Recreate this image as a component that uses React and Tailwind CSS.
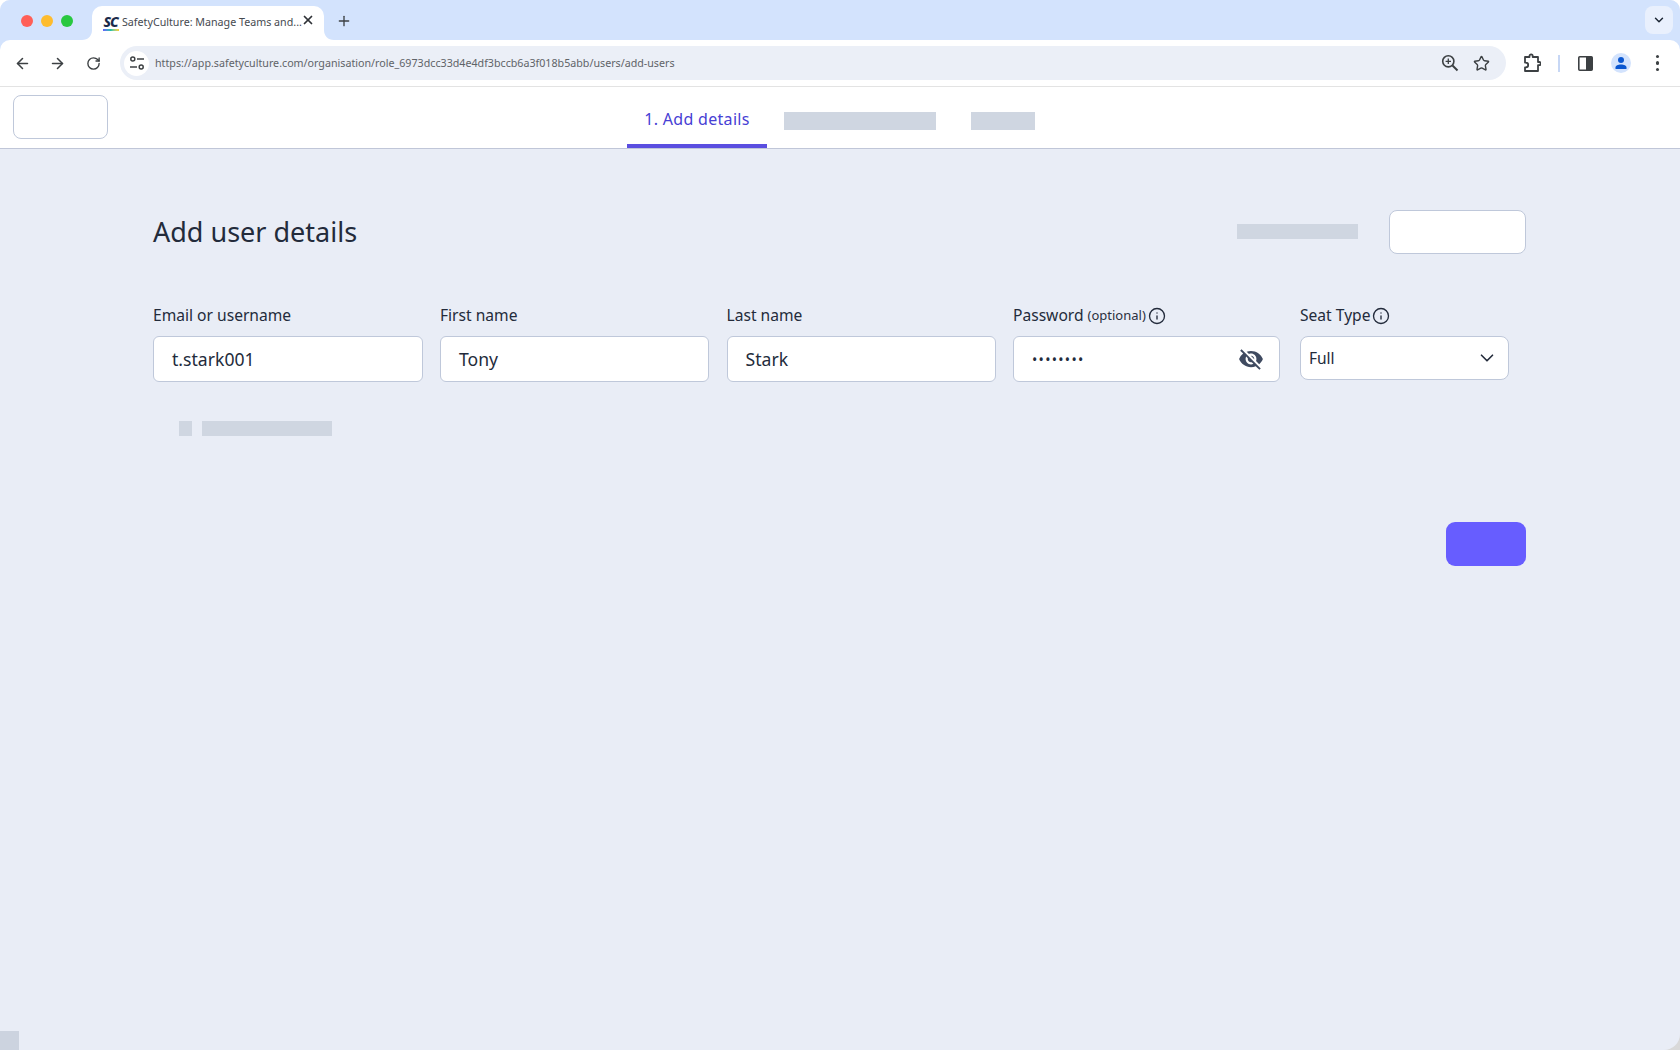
import React from "react";
import { ArrowLeft, ArrowRight, RotateCw, Plus, X, ChevronDown, Star, Info } from "lucide-react";
import { MdVisibilityOff } from "react-icons/md";

function Flare({ side }) {
  const d = side === "left" ? "M10 0 C10 6 6 10 0 10 L10 10 Z" : "M0 0 C0 6 4 10 10 10 L0 10 Z";
  return (
    <svg width="10" height="10" viewBox="0 0 10 10" className={side === "left" ? "absolute bottom-0 left-[-10px]" : "absolute bottom-0 right-[-10px]"}>
      <path d={d} fill="#ffffff" />
    </svg>
  );
}

function TuneIcon() {
  return (
    <svg width="16" height="16" viewBox="0 0 16 16" fill="none" stroke="#3c4043" strokeWidth="1.5">
      <circle cx="3.8" cy="4" r="2" />
      <path d="M8 4h7" />
      <path d="M1 12h7" />
      <circle cx="12.2" cy="12" r="2" />
    </svg>
  );
}

function ZoomPlus() {
  return (
    <svg width="18" height="18" viewBox="0 0 18 18" fill="none" stroke="#3c4043" strokeWidth="1.6">
      <circle cx="7.3" cy="7.3" r="5.6" />
      <path d="M11.5 11.5L16.5 16.5" strokeWidth="2" />
      <path d="M7.3 4.6v5.4M4.6 7.3h5.4" strokeWidth="1.3" />
    </svg>
  );
}

function PuzzleIcon() {
  return (
    <svg width="18" height="20" viewBox="0 0 18 20" fill="none" stroke="#3c4043" strokeWidth="1.8" strokeLinejoin="round">
      <path d="M2 4h4.5V3a1.6 1.6 0 0 1 3.2 0v1H15v5h1.2a1.6 1.6 0 0 1 0 3.2H15V18H2v-3.6h.8a2.4 2.4 0 0 0 0-4.8H2z" />
    </svg>
  );
}

function SidePanelIcon() {
  return (
    <svg width="15" height="15" viewBox="0 0 15 15">
      <rect x="0.8" y="0.8" width="13.4" height="13.4" rx="1" fill="#ffffff" stroke="#3c4043" strokeWidth="1.6" />
      <rect x="8" y="0.8" width="6.2" height="13.4" fill="#3c4043" />
    </svg>
  );
}

function Avatar() {
  return (
    <div className="w-[20px] h-[20px] rounded-full bg-[#d3e3fd] flex items-center justify-center">
      <svg width="14" height="14" viewBox="0 0 14 14" fill="#0b57d0">
        <circle cx="7" cy="4" r="3" />
        <path d="M1.5 13v-1.6C1.5 9.6 4 8.4 7 8.4s5.5 1.2 5.5 3V13z" />
      </svg>
    </div>
  );
}

function Kebab() {
  return (
    <div className="flex flex-col gap-[3px]">
      <span className="w-[3.5px] h-[3.5px] rounded-full bg-[#3c4043]" />
      <span className="w-[3.5px] h-[3.5px] rounded-full bg-[#3c4043]" />
      <span className="w-[3.5px] h-[3.5px] rounded-full bg-[#3c4043]" />
    </div>
  );
}

function Field({ label, width, children, extra }) {
  return (
    <div className={`flex flex-col ${width}`}>
      <div className="flex items-center h-[22px] pt-[2px] mb-[10px] text-[15.6px] font-normal text-[#232b3b] whitespace-nowrap">
        {label}
        {extra}
      </div>
      {children}
    </div>
  );
}

function TextBox({ value }) {
  return (
    <div className="h-[46px] bg-white border border-[#bfc8da] rounded-[6px] flex items-center pl-[18px] text-[17.6px] text-[#232b3b]">
      {value}
    </div>
  );
}

export default function App() {
  return (
    <div className="w-[1680px] h-[1050px] relative overflow-hidden bg-[linear-gradient(#ffffff_50%,#d9d9d9_50%)] font-['Noto_Sans','Liberation_Sans',sans-serif]">
      <div className="h-full flex flex-col bg-[#e9edf6] rounded-t-[10px] rounded-br-[16px] overflow-hidden">
        {/* Browser tab strip */}
        <div className="h-[40px] shrink-0 bg-[#d3e3fd] flex items-end relative">
          <div className="flex items-center gap-[8px] absolute left-[21px] top-[15px]">
            <span className="w-[12px] h-[12px] rounded-full bg-[#ff5f57]" />
            <span className="w-[12px] h-[12px] rounded-full bg-[#febc2e]" />
            <span className="w-[12px] h-[12px] rounded-full bg-[#28c840]" />
          </div>
          <div className="ml-[92px] h-[34px] w-[232px] bg-white rounded-t-[10px] relative flex items-center pl-[10px]">
            <Flare side="left" />
            <Flare side="right" />
            <div className="w-[17px] h-[16px] mr-[3px] flex flex-col items-center leading-none">
              <span className="text-[14px] leading-[13px] font-extrabold italic text-[#1b2a4a] tracking-[-1px]">SC</span>
              <span className="w-[16px] h-[2px] mt-[1px] bg-gradient-to-r from-[#6559ff] via-[#13c4a3] to-[#ffd028]" />
            </div>
            <span className="text-[10.7px] pb-[2px] text-[#45494f] whitespace-nowrap">SafetyCulture: Manage Teams and...</span>
            <X size={14} strokeWidth={3} className="text-[#2f3237] absolute left-[209px] top-[7px]" />
          </div>
          <Plus size={16} strokeWidth={2} className="text-[#3c4043] ml-[12px] mb-[11px]" />
          <div className="absolute right-[7px] top-[6px] w-[28px] h-[28px] rounded-[8px] bg-[#e9f0fd] flex items-center justify-center">
            <ChevronDown size={14} strokeWidth={2.5} className="text-[#1f2937]" />
          </div>
        </div>

        {/* Browser toolbar */}
        <div className="h-[47px] shrink-0 bg-[#d3e3fd]">
          <div className="h-[47px] bg-white rounded-t-[10px] border-b border-[#e3e3e3] flex items-center pl-[14px]">
            <ArrowLeft size={17} strokeWidth={2.2} className="text-[#3c4043] mr-[18px]" />
            <ArrowRight size={17} strokeWidth={2.2} className="text-[#3c4043] mr-[20px]" />
            <RotateCw size={15} strokeWidth={2.2} className="text-[#3c4043] mr-[19px]" />
            <div className="w-[1386px] h-[34px] rounded-full bg-[#ebeff7] flex items-center pl-[4px]">
              <div className="w-[25px] h-[25px] rounded-full bg-white flex items-center justify-center mr-[6px]">
                <TuneIcon />
              </div>
              <span className="text-[10.7px] text-[#5f6368] whitespace-nowrap">
                https://app.safetyculture.com/organisation/role_6973dcc33d4e4df3bccb6a3f018b5abb/users/add-users
              </span>
              <div className="ml-auto flex items-center gap-[14px] pr-[16px]">
                <ZoomPlus />
                <Star size={17} strokeWidth={2} className="text-[#3c4043]" />
              </div>
            </div>
            <div className="ml-[17px]"><PuzzleIcon /></div>
            <span className="w-[1.5px] h-[17px] bg-[#c7d7f5] ml-[17px]" />
            <div className="ml-[18px]"><SidePanelIcon /></div>
            <div className="ml-[18px]"><Avatar /></div>
            <div className="ml-[25px]"><Kebab /></div>
          </div>
        </div>

        {/* App header */}
        <div className="h-[62px] shrink-0 bg-white border-b border-[#c0c6d8] relative flex pl-[627px]">
          <div className="absolute left-[13px] top-[8px] w-[95px] h-[44px] rounded-[8px] bg-white border border-[#bfc8da]" />
          <div className="relative w-[140px] flex items-center justify-center pt-[3px] text-[16px] font-normal tracking-[0.3px] text-[#4740d4]">
            1. Add details
            <span className="absolute left-0 right-0 bottom-0 h-[4px] bg-[#5a4ee0]" />
          </div>
          <span className="w-[152px] h-[18px] mt-[25px] ml-[17px] bg-[#cfd6e1]" />
          <span className="w-[64px] h-[18px] mt-[25px] ml-[35px] bg-[#cfd6e1]" />
        </div>

        {/* Page */}
        <div className="flex flex-col pl-[153px] pr-[154px]">
          <div className="flex items-center justify-between mt-[61px] h-[44px]">
            <h1 className="text-[27px] font-normal text-[#232b3b]">Add user details</h1>
            <div className="flex items-center gap-[31px]">
              <span className="w-[121px] h-[15px] mb-[2px] bg-[#cfd6e1]" />
              <span className="w-[137px] h-[44px] rounded-[8px] bg-white border border-[#bfc8da]" />
            </div>
          </div>

          <div className="flex mt-[50px]">
            <Field label="Email or username" width="w-[270px] mr-[17px]"><TextBox value="t.stark001" /></Field>
            <Field label="First name" width="w-[269px] mr-[17.5px]"><TextBox value="Tony" /></Field>
            <Field label="Last name" width="w-[269px] mr-[17.5px]"><TextBox value="Stark" /></Field>
            <Field
              label="Password"
              width="w-[267px] mr-[20px]"
              extra={
                <>
                  <span className="ml-[4px] text-[13px] font-normal text-[#2a3040]">(optional)</span>
                  <Info size={18} strokeWidth={1.8} className="ml-[2.5px] text-[#232b3b]" />
                </>
              }
            >
              <div className="h-[46px] bg-white border border-[#bfc8da] rounded-[6px] flex items-center justify-between pl-[18px] pr-[15px]">
                <span className="text-[14px] text-[#232b3b] tracking-[1.3px]">••••••••</span>
                <MdVisibilityOff size={26} className="text-[#3f4a60]" />
              </div>
            </Field>
            <Field
              label="Seat Type"
              width="w-[209px]"
              extra={<Info size={18} strokeWidth={1.8} className="ml-[2px] text-[#232b3b]" />}
            >
              <div className="h-[44px] bg-white border border-[#bfc8da] rounded-[8px] flex items-center justify-between pl-[8px] pr-[10px] text-[15.5px] text-[#232b3b]">
                <span className="pt-[1px]">Full</span>
                <ChevronDown size={22} strokeWidth={1.8} className="text-[#232b3b]" />
              </div>
            </Field>
          </div>

          <div className="flex items-center gap-[10px] mt-[39px] pl-[26px]">
            <span className="w-[13px] h-[15px] bg-[#cfd6e1]" />
            <span className="w-[130px] h-[15px] bg-[#cfd6e1]" />
          </div>

          <span className="self-end mt-[86px] w-[80px] h-[44px] rounded-[9px] bg-[#675dff]" />
        </div>
      </div>
      <span className="absolute left-0 bottom-0 w-[19px] h-[19px] bg-[#ccd3df]" />
    </div>
  );
}
